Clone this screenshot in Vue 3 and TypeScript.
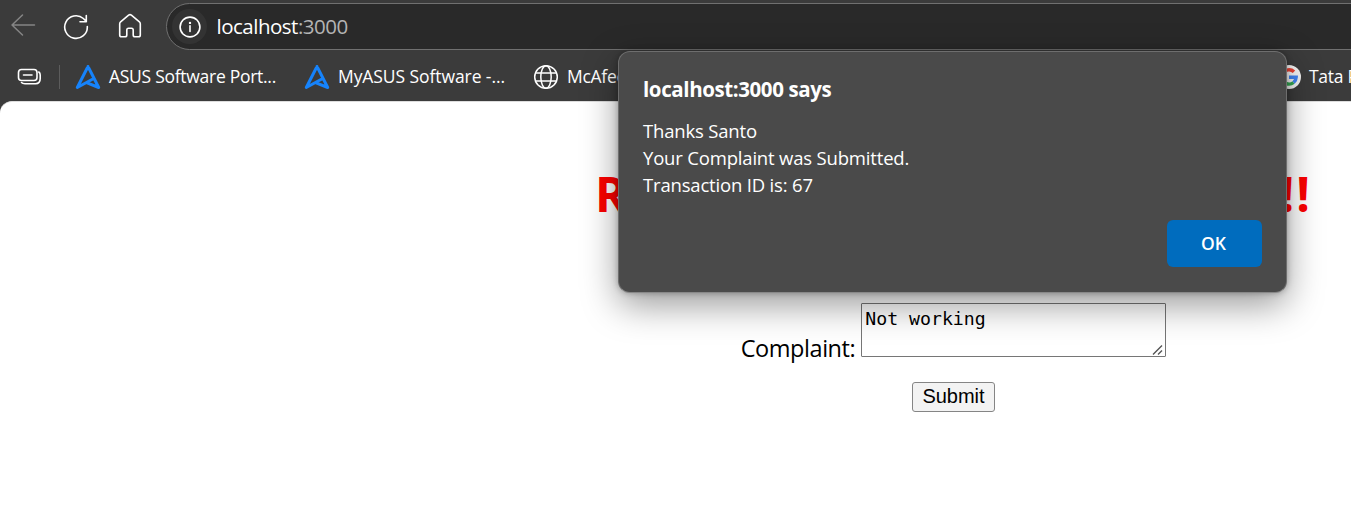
<script setup lang="ts">
import { ref } from 'vue'

interface Bookmark {
  label: string
  icon: 'asus' | 'globe' | 'google'
  key: string
}

const bookmarks: Bookmark[] = [
  { key: 'asus', label: 'ASUS Software Port...', icon: 'asus' },
  { key: 'myasus', label: 'MyASUS Software -...', icon: 'asus' },
  { key: 'mcafee', label: 'McAfee', icon: 'globe' },
  { key: 'tata', label: 'Tata Power', icon: 'google' },
]
const messageLines: string[] = [
  'Thanks Santo',
  'Your Complaint was Submitted.',
  'Transaction ID is: 67',
]
const complaint = ref('Not working')
</script>

<template>
  <div class="window">
    <header class="toolbar">
      <svg class="back" width="26" height="26" viewBox="0 0 26 26"><path d="M24.500 13H2M12.500 3L2 13l10.500 10" /></svg>
      <svg class="reload" width="26" height="26" viewBox="0 0 26 26"><path d="M24.300 12.500A11.300 11.300 0 1 1 20.400 4.500L23.300 7.500M23.300 1.500V7.700H17" /></svg>
      <svg class="home" width="24" height="26" viewBox="0 0 24 26"><path d="M1.700 10.800 Q1.700 9.700 2.600 8.900L10.600 2.200Q12 1.100 13.400 2.200L21.400 8.900Q22.300 9.700 22.300 10.800V22Q22.300 23.800 20.500 23.800H17Q15.200 23.800 15.200 22V17Q15.200 15.300 13.500 15.300H10.500Q8.800 15.300 8.800 17V22Q8.800 23.800 7 23.800H3.500Q1.700 23.800 1.700 22Z" /></svg>
      <div class="address">
        <span class="info">
          <svg width="22" height="22" viewBox="0 0 22 22"><circle cx="11" cy="11" r="9.900" /><path d="M11 9.700V15.500" /><circle class="dot" cx="11" cy="6.900" r="1.200" /></svg>
        </span>
        <span class="url">localhost<span class="port">:3000</span></span>
      </div>
    </header>

    <nav class="bookmarks">
      <svg class="stack" width="26" height="18" viewBox="0 0 26 18"><rect x="1.500" y="1.500" width="18.500" height="11" rx="3" /><path d="M6.500 7h8.500M21.800 4Q23.200 5 23.200 7V10.500Q23.200 15.700 18.500 15.700H8Q5.500 15.700 4.500 14.500" /></svg>
      <span class="divider"></span>
      <span v-for="item in bookmarks" :key="item.key" class="bookmark" :class="item.key">
        <svg v-if="item.icon === 'asus'" class="asus-icon" width="26" height="26" viewBox="0 0 26 26"><path d="M13 2.500L2.300 23.500L18.700 14.500M11.500 18.600L23.700 23.500L13 2.500" /></svg>
        <svg v-else-if="item.icon === 'globe'" class="globe-icon" width="26" height="26" viewBox="0 0 26 26"><circle cx="13" cy="13" r="11.300" /><ellipse cx="13" cy="13" rx="5.200" ry="11.300" /><path d="M2.700 9h20.600M2.700 17h20.600" /></svg>
        <svg v-else width="24" height="24" viewBox="0 0 24 24"><circle cx="12" cy="12" r="12" fill="#f5f5f5" /><g fill="none" stroke-width="3.400"><path d="M5.800 8.400A7.200 7.200 0 0 1 17 6.800" stroke="#ea4335" /><path d="M5.800 8.400A7.200 7.200 0 0 0 5.800 15.600" stroke="#fbbc05" /><path d="M5.800 15.600A7.200 7.200 0 0 0 16.600 17.500" stroke="#34a853" /><path d="M12 12.200H19.200A7.200 7.200 0 0 1 16.600 17.500" stroke="#4285f4" /></g></svg>
        <span class="bookmark-label">{{ item.label }}</span>
      </span>
    </nav>

    <main class="page">
      <h1>Register Your Complaint Here<span class="marks">!!</span></h1>
      <div class="field">
        <label for="complaint">Complaint:</label>
        <div class="area">
          <textarea id="complaint" v-model="complaint" spellcheck="false"></textarea>
          <svg class="grip" width="12" height="12" viewBox="0 0 12 12"><path d="M1 10.500L10 1.500M6 10.500L10 6.500" /></svg>
        </div>
      </div>
      <button class="submit" type="button">Submit</button>
    </main>

    <section class="dialog" role="alertdialog">
      <h2>localhost:3000 says</h2>
      <p v-for="line in messageLines" :key="line">{{ line }}</p>
      <button class="ok" type="button">OK</button>
    </section>
  </div>
</template>

<style>
html, body { margin: 0; overflow: hidden; background: #3b3b3b; }
</style>

<style scoped>
.window { position: relative; width: 1351px; height: 516px; overflow: hidden; background: #3b3b3b; font-family: "Open Sans", sans-serif; }
svg { display: block; flex: none; }
.toolbar { display: flex; align-items: center; height: 53px; box-sizing: border-box; padding-left: 10px; }
.toolbar svg { fill: none; stroke: #fff; stroke-width: 1.6; stroke-linecap: round; stroke-linejoin: round; }
.toolbar .back { stroke: #858585; stroke-width: 1.5; margin-top: -3px; }
.reload { margin-left: 27px; }
.home { margin-left: 29px; margin-top: -1px; }
.address { display: flex; align-items: center; flex: none; box-sizing: border-box; width: 1300px; height: 47px; margin-left: 24px; padding-left: 5px; border: 1px solid #707070; border-radius: 24px; background: #292929; }
.info { display: flex; align-items: center; justify-content: center; width: 35px; height: 35px; border-radius: 50%; background: #333; }
.info .dot { fill: #fff; stroke: none; }
.url { margin: 0 0 2px 9.5px; color: #fff; font-size: 20.5px; letter-spacing: -0.5px; line-height: 30px; }
.port { color: #b4b4b4; }
.bookmarks { display: flex; align-items: center; height: 48px; padding-left: 17px; }
.stack { fill: none; stroke: #fff; stroke-width: 1.6; stroke-linecap: round; margin-top: -1px; }
.divider { flex: none; width: 1px; height: 24px; margin-left: 16px; background: #5c5c5c; }
.bookmark { display: flex; align-items: center; flex: none; height: 26px; color: #fff; font-size: 17.5px; line-height: 24px; white-space: nowrap; }
.bookmark-label { margin: 0 0 2px 8px; letter-spacing: -0.28px; }
.myasus .bookmark-label { letter-spacing: -0.08px; }
.asus { width: 229px; margin-left: 15px; }
.myasus { width: 229px; }
.mcafee { width: 744px; }
.asus-icon { fill: none; stroke: #1683fb; stroke-width: 3; stroke-linecap: round; stroke-linejoin: round; }
.globe-icon { fill: none; stroke: #fff; stroke-width: 1.5; }
.page { display: flex; flex-direction: column; align-items: center; box-sizing: border-box; width: 1907px; height: 415px; padding-top: 59px; border-top: 1px solid #ddd; border-radius: 12px 0 0 0; background: #fff; color: #000; }
h1 { margin: 0; color: #f00; font-size: 48px; line-height: 66px; font-weight: 700; letter-spacing: -0.9px; white-space: nowrap; }
.marks { letter-spacing: 2px; }
.field { display: flex; align-items: flex-end; margin-top: 76px; height: 54px; }
.field label { margin-right: 6px; font-size: 23.5px; line-height: 32px; transform: translateY(7px); letter-spacing: -0.45px; }
.area { position: relative; height: 54px; }
textarea { display: block; box-sizing: border-box; width: 305px; height: 54px; margin: 0; padding: 3px; border: 1px solid #767676; border-radius: 1px; outline: 0; resize: none; overflow: hidden; background: #fff; color: #000; font-family: "DejaVu Sans Mono", monospace; font-size: 18.2px; line-height: 24px; }
.grip { position: absolute; right: 2px; bottom: 1px; fill: none; stroke: #555; stroke-width: 1.4; }
.submit { box-sizing: border-box; width: 83px; height: 30px; margin-top: 25px; padding: 0 0 2px; border: 1px solid #858585; border-radius: 3px; background: #f3f3f3; color: #000; font: 20px/26px "Liberation Sans", Arial, sans-serif; }
.dialog { position: absolute; left: 618px; top: 51px; display: flex; flex-direction: column; box-sizing: border-box; width: 669px; height: 242px; padding: 22px 24px 25px; border: 1px solid rgba(255, 255, 255, 0.2); border-bottom-color: #888; border-radius: 12px; background: #4a4a4a; color: #fff; box-shadow: 0 12px 36px rgba(0, 0, 0, 0.4), 0 0 6px rgba(0, 0, 0, 0.28); }
h2 { margin: 0 0 13px; font-size: 20.5px; line-height: 30px; font-weight: 700; letter-spacing: -0.4px; }
p { margin: 0; font-size: 18.5px; line-height: 27px; letter-spacing: -0.18px; }
.ok { width: 95px; height: 47px; margin-top: auto; align-self: flex-end; padding: 0 2px 2px 0; border: 0; border-radius: 6px; background: #006cbe; color: #fff; font: 600 17.5px/24px "Open Sans", sans-serif; }
</style>
